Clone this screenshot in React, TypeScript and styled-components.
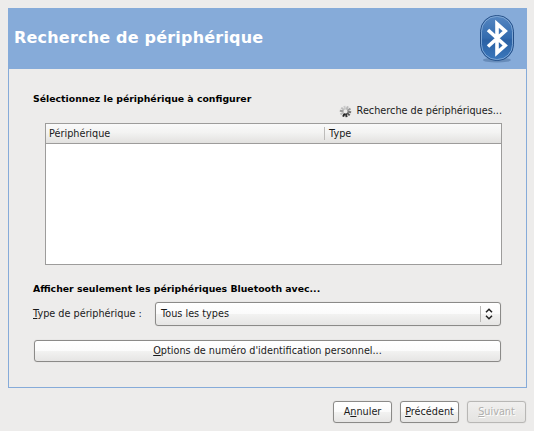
import React from "react";
import styled, { createGlobalStyle } from "styled-components";

const GlobalStyle = createGlobalStyle`
  * { box-sizing: border-box; }
  html, body { margin: 0; background: #edeceb; }
  body { font: 9.7px/12px "DejaVu Sans", sans-serif; color: #1a1a1a; overflow: hidden; }
`;

const Window = styled.div`
  width: 534px;
  height: 431px;
  padding: 8px 7px 0 8px;
  background: #edeceb;
`;

const Panel = styled.main`
  height: 380px;
  border: 1px solid #86abd9;
  display: flex;
  flex-direction: column;
`;

const Header = styled.header`
  height: 60px;
  flex: none;
  display: flex;
  align-items: center;
  justify-content: space-between;
  padding: 0 11px 2px 5px;
  background: #86abd9;
`;

const Title = styled.h1`
  margin: 0;
  font-size: 16px;
  line-height: 20px;
  font-weight: bold;
  letter-spacing: 0.2px;
  color: #fff;
  white-space: nowrap;
`;

const Content = styled.div`
  padding: 24px 24px 0;
  display: flex;
  flex-direction: column;
`;

const SectionTitle = styled.h2`
  margin: 0;
  font-size: 9.33px;
  line-height: 12px;
  font-weight: bold;
  color: #000;
  white-space: nowrap;
`;

const Status = styled.div`
  height: 12px;
  display: flex;
  justify-content: flex-end;
  align-items: center;
  gap: 5px;
  white-space: nowrap;
`;

const Table = styled.div`
  height: 142px;
  margin: 6px 0 0 12px;
  border: 1px solid #9d9c9b;
  background: #fff;
`;

const TableHead = styled.div`
  height: 20px;
  display: grid;
  grid-template-columns: 278px 1fr;
  align-items: center;
  border-bottom: 1px solid #9d9c9b;
  background: linear-gradient(#fafafa, #f3f3f2 45%, #e2e1df);
`;

const HeadCell = styled.div<{ $divided?: boolean }>`
  height: 13px;
  line-height: 13px;
  padding-left: ${(p) => (p.$divided ? 4 : 3)}px;
  border-left: ${(p) => (p.$divided ? "1px solid #bdbcba" : "none")};
`;

const FilterTitle = styled(SectionTitle)`
  margin-top: 18px;
`;

const FilterRow = styled.div`
  display: flex;
  align-items: center;
  height: 24px;
  margin-top: 7px;
  padding-right: 1px;
`;

const Label = styled.label`
  width: 122px;
  flex: none;
  white-space: nowrap;
`;

const Key = styled.span`
  text-decoration: underline;
  text-decoration-thickness: 1px;
  text-underline-offset: 1px;
  text-decoration-skip-ink: none;
`;

const Button = styled.button<{ $width?: number }>`
  width: ${(p) => (p.$width ? `${p.$width}px` : "auto")};
  height: 22px;
  padding: 0;
  border: 1px solid #8b8a88;
  border-radius: 3px;
  background: linear-gradient(#fff, #fbfbfb 50%, #f2f2f1 52%, #e6e5e4);
  box-shadow: 0 0 1px rgba(0, 0, 0, 0.22);
  font: inherit;
  color: #1a1a1a;
  white-space: nowrap;

  &:disabled {
    border-color: #b8b7b5;
    background: linear-gradient(#f0efee, #e4e3e1);
    color: #b0afad;
    text-shadow: 1px 1px 0 #fff;
  }
`;

const Combo = styled(Button)`
  flex: 1;
  height: 24px;
  display: flex;
  align-items: center;
  justify-content: space-between;
  padding: 0 7px 0 5px;
`;

const Arrows = styled.span`
  height: 16px;
  padding-left: 4px;
  display: flex;
  align-items: center;
  border-left: 1px solid #b9b8b6;
`;

const PinButton = styled(Button)`
  margin: 14px 1px 0;
`;

const Actions = styled.footer`
  display: flex;
  justify-content: flex-end;
  gap: 8px;
  padding: 13px 1px 0 0;
`;

const BluetoothLogo = () => (
  <svg width="36" height="50" viewBox="0 0 36 50">
    <defs>
      <linearGradient id="badge" x1="0" y1="0" x2="0" y2="1">
        <stop offset="0" stopColor="#5687c2" />
        <stop offset=".5" stopColor="#336bae" />
        <stop offset=".55" stopColor="#2b61a4" />
        <stop offset="1" stopColor="#3c79bd" />
      </linearGradient>
    </defs>
    <ellipse cx="18" cy="47" rx="14" ry="2.5" fill="#4d719e" opacity=".55" />
    <rect x="1.5" y="2.5" width="33" height="45" rx="16" fill="url(#badge)" stroke="#254f87" />
    <rect x="2.5" y="3.5" width="31" height="43" rx="15" fill="none" stroke="#83aad7" strokeWidth=".9" />
    <path d="M9 17 26.2 32.5 18 39.8V10.8L26.2 18 9 33.5" fill="none" stroke="#fff" strokeWidth="3.6" />
  </svg>
);

const spokes = ["#242424", "#343434", "#555", "#777", "#999", "#b8b8b8", "#cacaca", "#bdbdbd", "#999", "#bbb"];

const Spinner = () => (
  <svg width="13" height="13" viewBox="0 0 13 13">
    {spokes.map((color, i) => (
      <path
        key={color + i}
        d="M6.5 8.5V12.2"
        stroke={color}
        strokeWidth="2"
        transform={`rotate(${25 - i * 36} 6.5 6.5)`}
      />
    ))}
  </svg>
);

export default function App() {
  return (
    <>
      <GlobalStyle />
      <Window>
        <Panel>
          <Header>
            <Title>Recherche de périphérique</Title>
            <BluetoothLogo />
          </Header>
          <Content>
            <SectionTitle>Sélectionnez le périphérique à configurer</SectionTitle>
            <Status>
              <Spinner />
              <span>Recherche de périphériques...</span>
            </Status>
            <Table>
              <TableHead>
                <HeadCell>Périphérique</HeadCell>
                <HeadCell $divided>Type</HeadCell>
              </TableHead>
            </Table>
            <FilterTitle>Afficher seulement les périphériques Bluetooth avec...</FilterTitle>
            <FilterRow>
              <Label><Key>T</Key>ype de périphérique :</Label>
              <Combo>
                <span>Tous les types</span>
                <Arrows>
                  <svg width="8" height="12" viewBox="0 0 8 12" fill="none" stroke="#222" strokeWidth="1.5">
                    <path d="M1 4.3 4 1.3 7 4.3M1 7.7 4 10.7 7 7.7" />
                  </svg>
                </Arrows>
              </Combo>
            </FilterRow>
            <PinButton><Key>O</Key>ptions de numéro d'identification personnel...</PinButton>
          </Content>
        </Panel>
        <Actions>
          <Button $width={59}>A<Key>n</Key>nuler</Button>
          <Button $width={59}><Key>P</Key>récédent</Button>
          <Button $width={59} disabled><Key>S</Key>uivant</Button>
        </Actions>
      </Window>
    </>
  );
}
